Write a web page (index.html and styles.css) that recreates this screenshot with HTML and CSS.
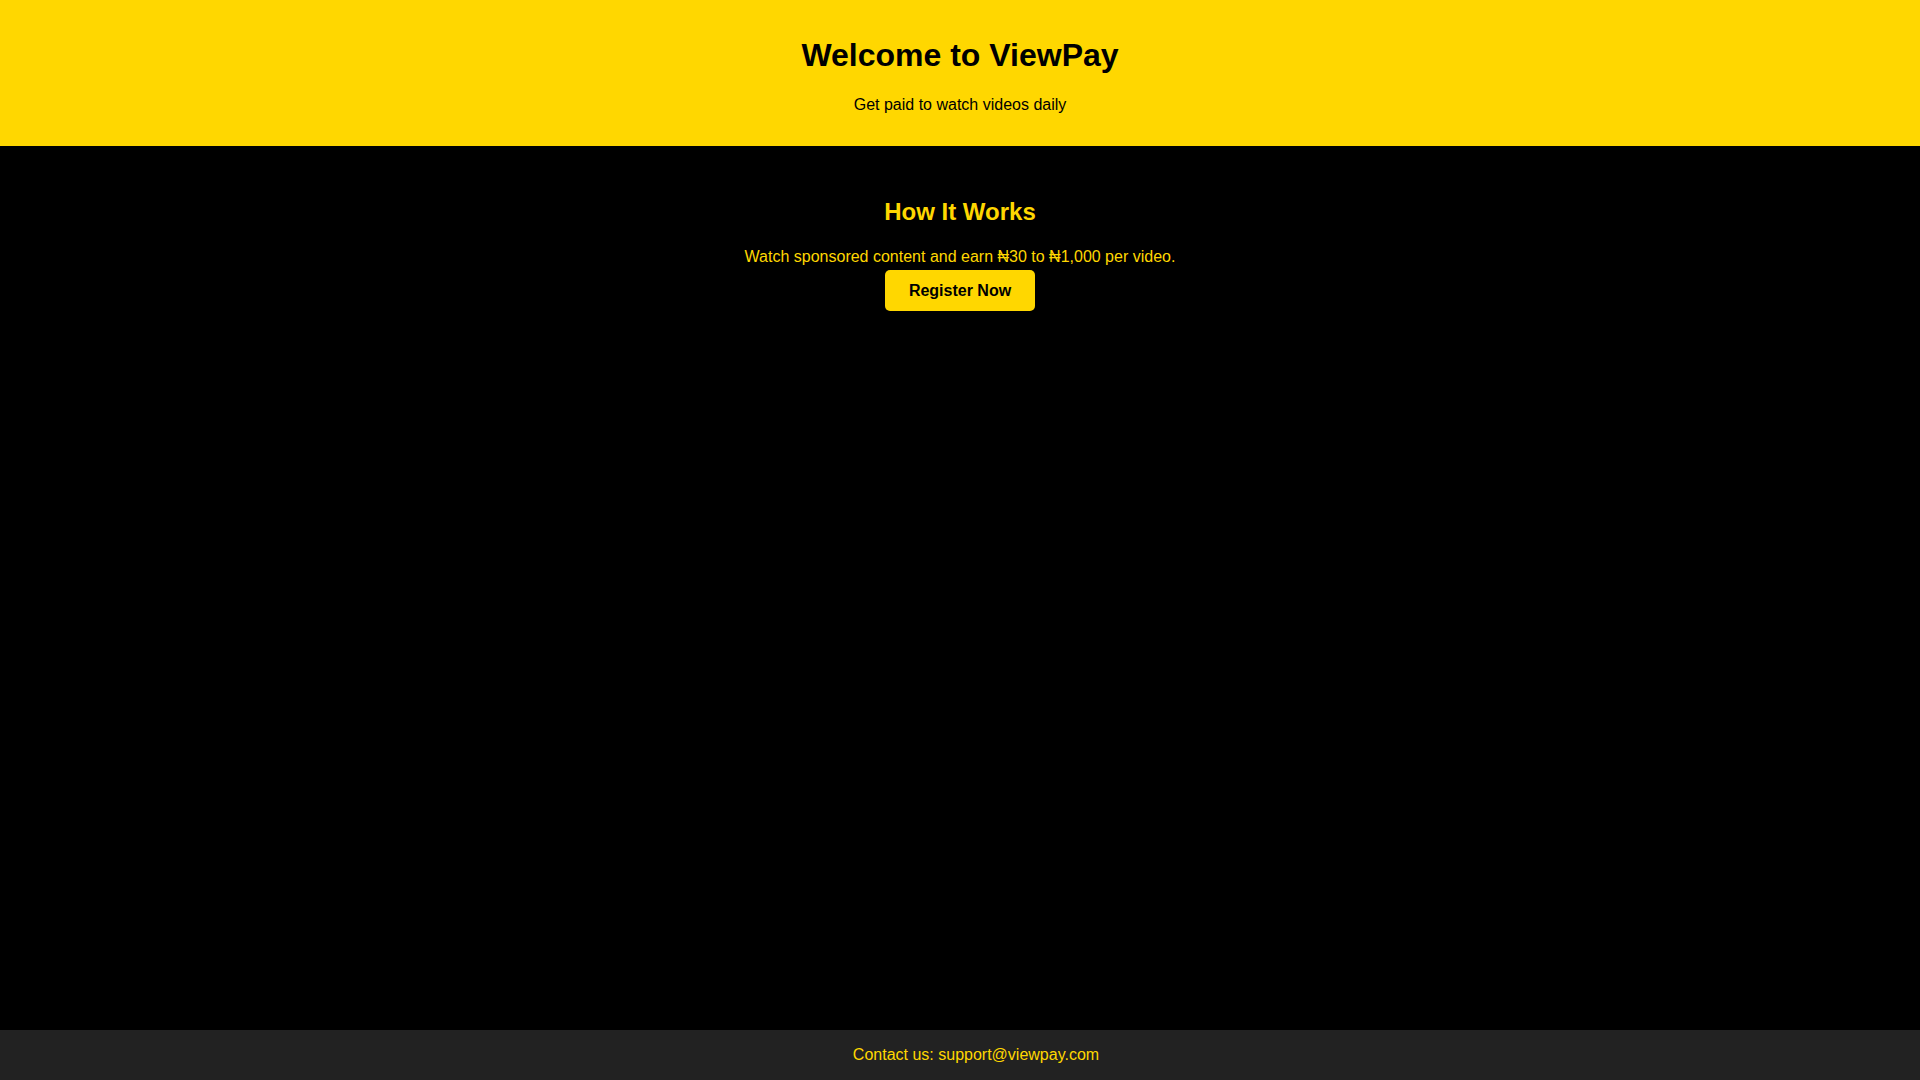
FILE: index.html
```html
<!DOCTYPE html>
<html lang="en">
<head>
<meta charset="UTF-8">
<title>ViewPay</title>
<link rel="stylesheet" href="styles.css">
</head>
<body>
<div class="page">
  <header class="site-header">
    <h1 class="site-title">Welcome to ViewPay</h1>
    <p class="site-tagline">Get paid to watch videos daily</p>
  </header>
  <main class="content">
    <section class="how">
      <h2 class="how-title">How It Works</h2>
      <p class="how-text">Watch sponsored content and earn ₦30 to ₦1,000 per video.</p>
      <a class="btn" href="#">Register Now</a>
    </section>
  </main>
  <footer class="site-footer">
    <p class="footer-text">Contact us: support@viewpay.com</p>
  </footer>
</div>
</body>
</html>
```

FILE: styles.css
```css
html, body {
  margin: 0;
  padding: 0;
  background: #000;
}

body {
  font-family: "Liberation Sans", Arial, sans-serif;
  font-size: 16px;
  line-height: normal;
}

.page {
  display: flex;
  flex-direction: column;
  min-height: 100vh;
}

.site-header {
  background: #FFD700;
  color: #000;
  text-align: center;
  padding: 16px;
}

.site-title {
  font-size: 32px;
  font-weight: bold;
  margin: 21px 0 22px;
}

.site-tagline {
  margin: 0 0 15.5px;
}

.content {
  flex: 1;
  background: #000;
  color: #FFD700;
  text-align: center;
  padding: 32px 16px;
}

.how-title {
  font-size: 24px;
  font-weight: bold;
  margin: 20.2px 0 22px;
}

.how-text {
  margin: 0 0 4px;
}

.btn {
  display: inline-block;
  background: #FFD700;
  color: #000;
  font-weight: bold;
  text-decoration: none;
  padding: 11px 24px;
  line-height: 19px;
  border-radius: 5px;
}

.site-footer {
  background: #222;
  color: #FFD700;
  text-align: center;
  padding: 16px 0 16px 32px;
}

.footer-text {
  margin: 0;
}
```
